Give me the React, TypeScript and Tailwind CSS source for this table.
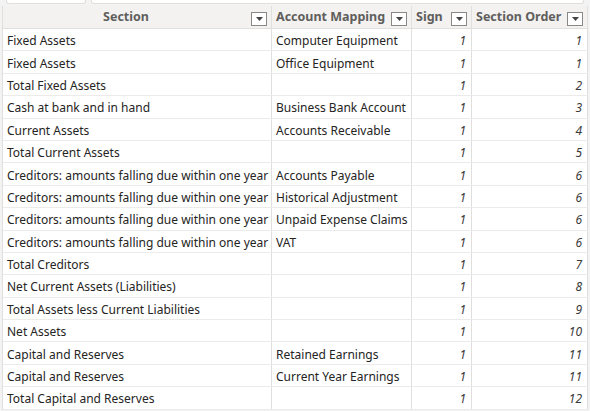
const rows: [string, string, number, number][] = [
  ["Fixed Assets", "Computer Equipment", 1, 1],
  ["Fixed Assets", "Office Equipment", 1, 1],
  ["Total Fixed Assets", "", 1, 2],
  ["Cash at bank and in hand", "Business Bank Account", 1, 3],
  ["Current Assets", "Accounts Receivable", 1, 4],
  ["Total Current Assets", "", 1, 5],
  ["Creditors: amounts falling due within one year", "Accounts Payable", 1, 6],
  ["Creditors: amounts falling due within one year", "Historical Adjustment", 1, 6],
  ["Creditors: amounts falling due within one year", "Unpaid Expense Claims", 1, 6],
  ["Creditors: amounts falling due within one year", "VAT", 1, 6],
  ["Total Creditors", "", 1, 7],
  ["Net Current Assets (Liabilities)", "", 1, 8],
  ["Total Assets less Current Liabilities", "", 1, 9],
  ["Net Assets", "", 1, 10],
  ["Capital and Reserves", "Retained Earnings", 1, 11],
  ["Capital and Reserves", "Current Year Earnings", 1, 11],
  ["Total Capital and Reserves", "", 1, 12],
];

const cols = "grid grid-cols-[269px_140px_60px_116px]";

const FilterBox = () => (
  <span className="absolute right-[4px] top-[6px] w-[16px] h-[14px] border border-[#8a8886] bg-white flex items-center justify-center">
    <svg width="7" height="4" viewBox="0 0 7 4">
      <path d="M0 0h7L3.5 4z" fill="#444" />
    </svg>
  </span>
);

const Head = ({ label, center }: { label: string; center?: boolean }) => (
  <div
    className={`relative h-[22px] pt-[1px] flex items-center border-r border-[#e1dfdd] font-bold text-[#605e5c] text-[12.5px] whitespace-nowrap ${
      center ? "justify-center pr-[22px]" : "pl-[4px]"
    }`}
  >
    <span>{label}</span>
    <FilterBox />
  </div>
);

export default function App() {
  return (
    <div
      className="w-[590px] h-[411px] bg-[#f3f3f3] overflow-hidden relative"
      style={{ fontFamily: '"Noto Sans", "Open Sans", sans-serif' }}
    >
      <div className="flex h-[6px] gap-[5px] px-[6px]">
        <div className="w-[80px] h-[4px] bg-white border border-t-0 border-[#e1dfdd] rounded-b-[3px]" />
        <div className="flex-1 h-[4px] bg-white border border-t-0 border-[#e1dfdd] rounded-b-[3px]" />
      </div>
      <div className="ml-[2px] w-[586px] border-l border-[#e1dfdd] text-[12px] text-[#252423]">
        <div className={`${cols} bg-[#f3f2f1] border-b border-[#e1dfdd]`}>
          <Head label="Section" center />
          <Head label="Account Mapping" />
          <Head label="Sign" />
          <Head label="Section Order" />
        </div>
        {rows.map(([s, m, sign, order], i) => (
          <div key={i} className={`${cols} bg-white h-[22.4px] border-b border-[#edebe9]`}>
            <div className="pl-[4px] pt-[3px] flex items-center border-r border-[#e1dfdd] whitespace-nowrap overflow-hidden">{s}</div>
            <div className="pl-[4px] pt-[3px] flex items-center border-r border-[#e1dfdd] whitespace-nowrap overflow-hidden">{m}</div>
            <div className="pr-[5px] pt-[3px] flex items-center justify-end border-r border-[#e1dfdd] italic text-[#3b3a39]">{sign}</div>
            <div className="pr-[5px] pt-[3px] flex items-center justify-end border-r border-[#e1dfdd] italic text-[#3b3a39]">{order}</div>
          </div>
        ))}
      </div>
    </div>
  );
}
